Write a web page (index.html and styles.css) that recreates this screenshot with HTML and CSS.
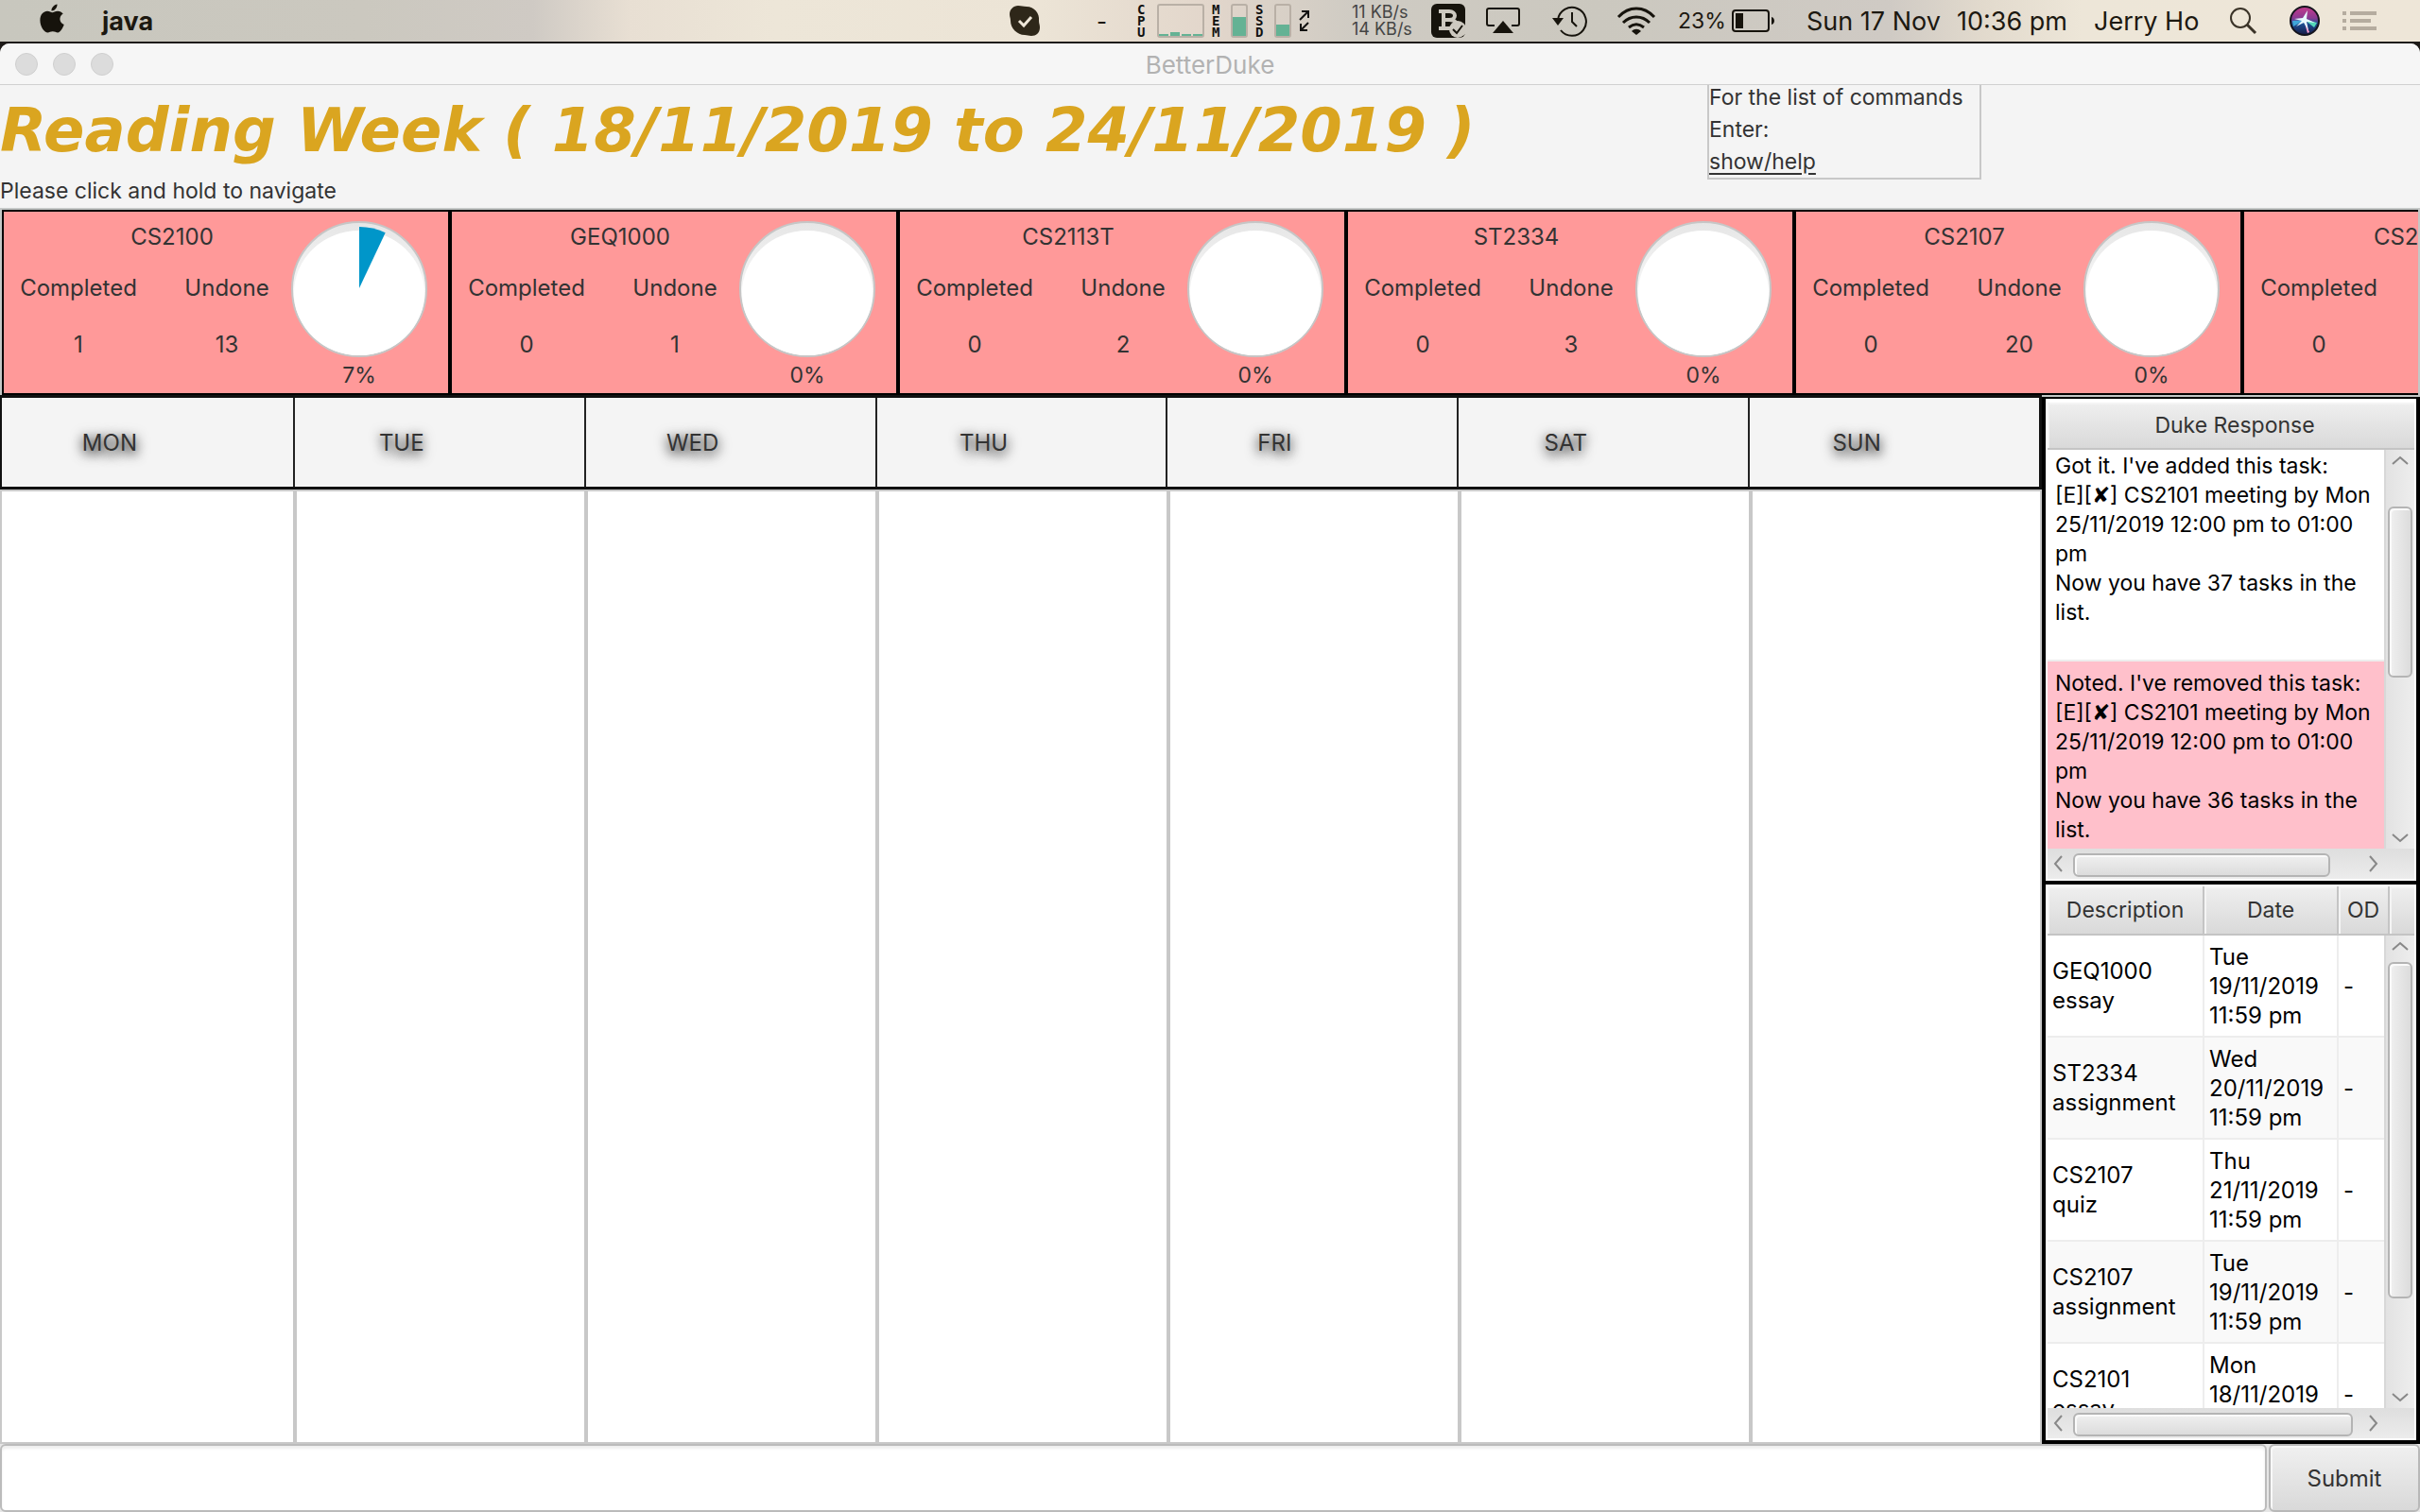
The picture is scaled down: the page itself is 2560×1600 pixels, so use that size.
FILE: index.html
```html
<!DOCTYPE html>
<html lang="en">
<head>
<meta charset="utf-8">
<title>BetterDuke</title>
<link rel="stylesheet" href="styles.css">
</head>
<body>
<header class="menubar">
  <svg class="apple" width="26" height="32" viewBox="0 0 26 32"><path fill="#16130c" d="M18.500 .500c.3 3.500-2.800 7.200-6 7C12.100 4.200 15.400 .900 18.500 .500zM13.300 9.200c1.300 0 3-1.500 5.800-1.500 2.300 0 4.300 1.100 5.600 2.900-4.900 2.900-4.100 9.500 1 11.500-.9 2.900-3.700 8.400-6.600 8.400-1.900 0-2.900-1.200-5.300-1.200-2.500 0-3.500 1.200-5.300 1.200C5.200 30.500.4 24.500.4 17.400c0-6.300 3.900-9.700 7.600-9.700 2.400 0 4.200 1.500 5.300 1.500z"/></svg>
  <strong class="app-name">java</strong>
  <div class="status">
    <svg width="32" height="32" viewBox="0 0 32 32"><path fill="#2e2719" d="M9 0C13 0 14 1 18 1c8 0 14 7 13 15 0 3 1 4 1 7 0 6-4 9-9 9-3 0-4-1-7-1C8 31 1 24 1 16c0-3-1-4-1-7 0-5 4-9 9-9z"/><path d="M10 16l5 5 8-9" fill="none" stroke="#eee6d8" stroke-width="3"/></svg>
    <span class="dash">-</span>
    <span class="stack">C<br>P<br>U</span>
    <svg width="50" height="36" viewBox="0 0 50 36"><rect x="1" y="1" width="48" height="34" rx="2" fill="none" stroke="#b9b0a6" stroke-width="2"/><path fill="#64b294" d="M2 32h10v2H2zM14 30h10v4H14zM26 32h10v2H26zM38 32h10v2H38z"/></svg>
    <span class="stack">M<br>E<br>M</span>
    <svg width="18" height="36" viewBox="0 0 18 36"><rect x="1" y="1" width="16" height="34" rx="2" fill="none" stroke="#b9b0a6" stroke-width="2"/><path fill="#64b294" d="M2 14h14v20H2z"/></svg>
    <span class="stack">S<br>S<br>D</span>
    <svg width="18" height="36" viewBox="0 0 18 36"><rect x="1" y="1" width="16" height="34" rx="2" fill="none" stroke="#b9b0a6" stroke-width="2"/><path fill="#64b294" d="M2 22h14v12H2z"/></svg>
    <svg width="12" height="24" viewBox="0 0 12 24"><path fill="none" stroke="#111" stroke-width="2" d="M3 2h7v7M10 2L1 11M2 15v7h7M2 22l8-8"/></svg>
    <span class="rate">11 KB/s<br>14 KB/s</span>
    <svg width="36" height="36" viewBox="0 0 36 36"><rect width="36" height="36" rx="6" fill="#16130c"/><path fill="none" stroke="#cdc9c0" stroke-width="4" d="M8 8h11c8 0 8 9 0 9h-6M13 8v17M8 26h12M19 17c3 0 6 1 7 3"/><circle cx="28" cy="27" r="9" fill="#cdc9c0"/><path fill="none" stroke="#16130c" stroke-width="2" d="M23 27l4 4 6-8"/></svg>
    <svg width="36" height="30" viewBox="0 0 36 30"><path fill="none" stroke="#16130c" stroke-width="2" d="M9 20H3a2 2 0 0 1-2-2V4a2 2 0 0 1 2-2h30a2 2 0 0 1 2 2v14a2 2 0 0 1-2 2h-6"/><path fill="#16130c" d="M18 15l11 13H7z"/></svg>
    <svg width="38" height="34" viewBox="0 0 38 34"><path fill="none" stroke="#16130c" stroke-width="2" d="M6 16A15 15 0 1 1 9 27M21 8v10l5 5"/><path fill="#16130c" d="M0 14h12l-6 8z"/></svg>
    <svg width="42" height="30" viewBox="0 0 42 30"><path fill="none" stroke="#16130c" stroke-width="3" d="M2 11C13-1 29-1 40 11M7 17c8-8 20-8 28 0M13 22c5-4 11-4 16 0"/><path fill="#16130c" d="M16 26c3-3 7-3 10 0l-5 4z"/></svg>
    <span class="percent">23%</span>
    <svg width="46" height="24" viewBox="0 0 46 24"><rect x="1" y="1" width="38" height="22" rx="3" fill="none" stroke="#16130c" stroke-width="2"/><path fill="#16130c" d="M4 4h8v16H4zM42 8c4 1 4 7 0 8z"/></svg>
    <span>Sun 17 Nov</span>
    <span>10:36 pm</span>
    <span>Jerry Ho</span>
    <svg width="30" height="30" viewBox="0 0 30 30"><circle cx="12" cy="12" r="10" fill="none" stroke="#3a3328" stroke-width="2"/><path d="M19 19l9 9" stroke="#3a3328" stroke-width="3"/></svg>
    <svg width="32" height="32" viewBox="0 0 32 32"><defs><linearGradient id="siri" x1="0" y1="0" x2="0" y2="1"><stop offset="0" stop-color="#c53a8c"/><stop offset=".4" stop-color="#8a3a92"/><stop offset=".6" stop-color="#1d4f93"/><stop offset="1" stop-color="#181a45"/></linearGradient></defs><circle cx="16" cy="16" r="15" fill="url(#siri)" stroke="#14141c" stroke-width="2"/><path d="M16 15L4 22l-1-6z" fill="#3fa6d8"/><path d="M16 15l13 3-3 5z" fill="#55d8b8"/><path d="M15 15l4 14 2-1z" fill="#ff9fd0"/><path d="M19 5l-1 9 9 4-9-1 2 9-5-8-8 4 6-6-8-2 9-1z" fill="#e8fbff"/></svg>
    <svg width="36" height="20" viewBox="0 0 36 20"><path fill="#b5ac9f" d="M0 0h4v4H0zM8 0h28v4H8zM0 8h4v4H0zM8 8h22v4H8zM0 16h4v4H0zM8 16h28v4H8z"/></svg>
  </div>
</header>

<div class="window">
  <div class="titlebar">
    <div class="lights"><i class="light"></i><i class="light"></i><i class="light"></i></div>
    <span class="window-title">BetterDuke</span>
  </div>

  <section class="top">
    <div class="heading">
      <h1>Reading Week ( 18/11/2019 to 24/11/2019 )</h1>
      <p class="hint">Please click and hold to navigate</p>
    </div>
    <div class="help"><p>For the list of commands<br>Enter:<br><u>show/help</u></p></div>
  </section>

  <svg width="0" height="0" class="defs"><defs>
    <linearGradient id="rim" x1="0" y1="0" x2="0" y2="1"><stop offset="0" stop-color="#e6e6e6"/><stop offset=".5" stop-color="#f6f6f6"/><stop offset="1" stop-color="#fff"/></linearGradient>
    <g id="dial"><circle cx="72" cy="72" r="71" fill="url(#rim)" stroke="#c6c6c6" stroke-width="2"/><ellipse cx="72" cy="76" rx="69" ry="66" fill="#fff"/></g>
  </defs></svg>

  <section class="modules">
    <article class="module">
      <span class="code">CS2100</span><span class="done-label">Completed</span><span class="todo-label">Undone</span><span class="done">1</span><span class="todo">13</span>
      <div class="progress"><svg width="144" height="144" viewBox="0 0 144 144"><use href="#dial"/><path fill="#0096c9" d="M72 71V6a65 65 0 0 1 27.700 6.200z"/></svg><span>7%</span></div>
    </article>
    <article class="module">
      <span class="code">GEQ1000</span><span class="done-label">Completed</span><span class="todo-label">Undone</span><span class="done">0</span><span class="todo">1</span>
      <div class="progress"><svg width="144" height="144" viewBox="0 0 144 144"><use href="#dial"/></svg><span>0%</span></div>
    </article>
    <article class="module">
      <span class="code">CS2113T</span><span class="done-label">Completed</span><span class="todo-label">Undone</span><span class="done">0</span><span class="todo">2</span>
      <div class="progress"><svg width="144" height="144" viewBox="0 0 144 144"><use href="#dial"/></svg><span>0%</span></div>
    </article>
    <article class="module">
      <span class="code">ST2334</span><span class="done-label">Completed</span><span class="todo-label">Undone</span><span class="done">0</span><span class="todo">3</span>
      <div class="progress"><svg width="144" height="144" viewBox="0 0 144 144"><use href="#dial"/></svg><span>0%</span></div>
    </article>
    <article class="module">
      <span class="code">CS2107</span><span class="done-label">Completed</span><span class="todo-label">Undone</span><span class="done">0</span><span class="todo">20</span>
      <div class="progress"><svg width="144" height="144" viewBox="0 0 144 144"><use href="#dial"/></svg><span>0%</span></div>
    </article>
    <article class="module">
      <span class="code">CS2101</span><span class="done-label">Completed</span><span class="done">0</span>
    </article>
  </section>

  <main class="main">
    <section class="calendar">
      <div class="day-names"><span>MON</span><span>TUE</span><span>WED</span><span>THU</span><span>FRI</span><span>SAT</span><span>SUN</span></div>
      <div class="days"><div></div><div></div><div></div><div></div><div></div><div></div><div></div></div>
    </section>

    <aside class="side">
      <section class="panel response">
        <div class="view">
          <table>
            <thead><tr><th>Duke Response</th></tr></thead>
            <tbody>
              <tr><td>Got it. I've added this task:<br>[E][✘] CS2101 meeting by Mon 25/11/2019 12:00 pm to 01:00 pm<br>Now you have 37 tasks in the list.</td></tr>
              <tr class="removed"><td>Noted. I've removed this task:<br>[E][✘] CS2101 meeting by Mon 25/11/2019 12:00 pm to 01:00 pm<br>Now you have 36 tasks in the list.</td></tr>
            </tbody>
          </table>
        </div>
        <div class="vscroll">
          <button type="button" aria-label="Scroll up"><svg width="18" height="10" viewBox="0 0 18 10"><path d="M1 9l8-7 8 7"/></svg></button>
          <div class="vtrack"><div class="thumb"></div></div>
          <button type="button" aria-label="Scroll down"><svg width="18" height="10" viewBox="0 0 18 10"><path d="M1 1l8 7 8-7"/></svg></button>
        </div>
        <div class="hscroll">
          <button type="button" aria-label="Scroll left"><svg width="10" height="18" viewBox="0 0 10 18"><path d="M9 1L2 9l7 8"/></svg></button>
          <div class="htrack"><div class="thumb"></div></div>
          <button type="button" aria-label="Scroll right"><svg width="10" height="18" viewBox="0 0 10 18"><path d="M1 1l7 8-7 8"/></svg></button>
        </div>
      </section>

      <section class="panel tasks">
        <div class="view">
          <table>
            <colgroup><col class="c-desc"><col class="c-date"><col class="c-od"><col></colgroup>
            <thead><tr><th>Description</th><th>Date</th><th>OD</th><th></th></tr></thead>
            <tbody>
              <tr><td>GEQ1000<br>essay</td><td>Tue<br>19/11/2019<br>11:59 pm</td><td>-</td><td></td></tr>
              <tr><td>ST2334<br>assignment</td><td>Wed<br>20/11/2019<br>11:59 pm</td><td>-</td><td></td></tr>
              <tr><td>CS2107<br>quiz</td><td>Thu<br>21/11/2019<br>11:59 pm</td><td>-</td><td></td></tr>
              <tr><td>CS2107<br>assignment</td><td>Tue<br>19/11/2019<br>11:59 pm</td><td>-</td><td></td></tr>
              <tr><td>CS2101<br>essay</td><td>Mon<br>18/11/2019<br>11:59 pm</td><td>-</td><td></td></tr>
            </tbody>
          </table>
        </div>
        <div class="vscroll">
          <button type="button" aria-label="Scroll up"><svg width="18" height="10" viewBox="0 0 18 10"><path d="M1 9l8-7 8 7"/></svg></button>
          <div class="vtrack"><div class="thumb"></div></div>
          <button type="button" aria-label="Scroll down"><svg width="18" height="10" viewBox="0 0 18 10"><path d="M1 1l8 7 8-7"/></svg></button>
        </div>
        <div class="hscroll">
          <button type="button" aria-label="Scroll left"><svg width="10" height="18" viewBox="0 0 10 18"><path d="M9 1L2 9l7 8"/></svg></button>
          <div class="htrack"><div class="thumb"></div></div>
          <button type="button" aria-label="Scroll right"><svg width="10" height="18" viewBox="0 0 10 18"><path d="M1 1l7 8-7 8"/></svg></button>
        </div>
      </section>
    </aside>
  </main>

  <form class="command">
    <input type="text" aria-label="Command">
    <button type="button" class="submit">Submit</button>
  </form>
</div>
</body>
</html>
```
FILE: styles.css
```css
* { box-sizing: border-box; }

body {
  margin: 0;
  height: 100vh;
  display: flex;
  flex-direction: column;
  overflow: hidden;
  background: #1d1a17;
  color: #333;
  font: 24px/31px Inter, "Liberation Sans", sans-serif;
}

button, input { font: inherit; color: inherit; margin: 0; }
svg { display: block; }
.defs { position: absolute; }

/* System menu bar */
.menubar {
  flex: none;
  height: 44px;
  display: flex;
  align-items: center;
  padding: 0 46px 0 42px;
  color: #1c1810;
  font-size: 27px;
  white-space: nowrap;
  background: linear-gradient(90deg, #c8c7be 0, #cbc8bf 15%, #cfcac4 22%, #e8dfd3 26%, #ede6d8 32%, #ece4d6 43%, #e2d6cb 50%, #cfcbc3 56%, #cbc8bf 66%, #cfcac4 78%, #e2dacd 82%, #ede6d8 86%, #eee6d8 100%);
}
.apple { margin-bottom: 4px; }
.app-name { margin-left: 40px; font-weight: 700; }
.status {
  margin-left: auto;
  height: 44px;
  display: grid;
  align-items: center;
  grid-template-columns: 92px 43px 21px 58px 20px 26px 20px 26px 56px 84px 58px 70px 68px 65px 57px 79px 159px 145px 143px 64px 56px 36px;
}
.dash { font-size: 24px; }
.stack { font: bold 14px/12px "DejaVu Sans Mono", monospace; color: #111; }
.rate { font-size: 18px; line-height: 18px; color: #444; }
.percent { font-size: 23px; }

/* Window chrome */
.window {
  flex: 1;
  min-height: 0;
  margin-top: 2px;
  display: flex;
  flex-direction: column;
  background: #f4f4f4;
  border-radius: 10px 10px 0 0;
  overflow: hidden;
}
.titlebar {
  flex: none;
  height: 44px;
  display: grid;
  grid-template-columns: 1fr auto 1fr;
  align-items: center;
  padding: 0 16px;
  background: #f6f6f6;
  border-bottom: 1px solid #d0d0d0;
}
.lights { display: flex; gap: 16px; }
.light {
  width: 24px;
  height: 24px;
  border-radius: 50%;
  background: #dcdcdc;
  border: 1px solid #cfcfcf;
}
.window-title {
  padding-top: 2px;
  color: #b2b2b2;
  font-size: 26px;
}

/* Heading and help */
.top {
  flex: none;
  height: 130px;
  display: grid;
  grid-template-columns: 1806fr 754fr;
  align-items: start;
  font-size: 23px;
}
h1 {
  margin: 0;
  padding-top: 10px;
  font: italic bold 64px/76px "DejaVu Sans", Verdana, sans-serif;
  color: #daa520;
  white-space: nowrap;
}
.hint { margin: 0; padding-top: 11px; }
.help {
  display: flow-root;
  width: 290px;
  height: 100px;
  line-height: 34px;
  white-space: nowrap;
  border: 2px solid #c8c8c8;
  border-top: 0;
}
.help p { margin: -4px 0 0; }
.help u { text-underline-offset: 4px; }

/* Module cards */
.modules {
  flex: none;
  height: 198px;
  display: flex;
  overflow: hidden;
  border: 2px solid #c4c7c6;
  border-bottom: 0;
}
.module {
  flex: none;
  width: 474px;
  height: 196px;
  display: grid;
  grid-template-columns: 158px 156px 124px;
  grid-template-rows: 52px 56px 64px 16px;
  align-items: center;
  justify-items: center;
  border: 2px solid #000;
  background: #ff9999;
}
.code { grid-area: 1 / 1 / 2 / 3; padding-left: 42px; }
.done-label { grid-area: 2 / 1; }
.todo-label { grid-area: 2 / 2; }
.done { grid-area: 3 / 1; }
.todo { grid-area: 3 / 2; }
.progress {
  grid-area: 1 / 3 / 5 / 4;
  align-self: start;
  display: flex;
  flex-direction: column;
  align-items: center;
  padding-top: 10px;
  font-size: 23px;
  gap: 4px;
}

/* Week calendar */
.main {
  flex: 1;
  min-height: 0;
  display: grid;
  grid-template-columns: 1fr 400px;
}
.calendar { display: flex; flex-direction: column; min-height: 0; }
.day-names {
  height: 100px;
  display: grid;
  grid-template-columns: repeat(7, 1fr);
  border: 2px solid #111;
  border-width: 3px 3px 3px 2px;
}
.day-names span {
  display: flex;
  align-items: center;
  justify-content: center;
  padding-right: 80px;
  text-shadow: 0 4px 12px rgba(0, 0, 0, .7), 0 3px 14px rgba(0, 0, 0, .6);
}
.day-names span + span { border-left: 2px solid #222; }
.days {
  flex: 1;
  display: grid;
  grid-template-columns: repeat(7, 1fr);
  padding-left: 2px;
  background: #fff;
  border: solid #c8c8c8;
  border-width: 2px 0 2px 2px;
}
.days div { border-right: 2px solid #c8c8c8; }
.days div + div { border-left: 2px solid #c8c8c8; }

/* Side panels */
.side {
  min-height: 0;
  display: grid;
  grid-template-rows: 514fr 594fr;
  border-top: 2px solid #c4c7c6;
}
.panel {
  min-height: 0;
  overflow: hidden;
  display: grid;
  grid-template-columns: 1fr 32px;
  background: #fff;
  border: 4px solid #000;
  padding: 2px;
}
.response { grid-template-rows: 50px 1fr 32px; border-width: 2px 4px; padding-top: 4px; font-size: 23px; }
.tasks { grid-template-rows: 52px 1fr 32px; border-top-width: 2px; font-size: 24px; }
.view { grid-area: 1 / 1 / 3 / 3; min-height: 0; overflow: hidden; }
table { width: 100%; table-layout: fixed; border-collapse: separate; border-spacing: 0; color: #000; }
th {
  height: 50px;
  padding: 0;
  font-size: 23px;
  font-weight: 400;
  color: #333;
  background: linear-gradient(#efefef, #d9d9d9);
  border-bottom: 2px solid #c4c4c4;
  box-shadow: inset 2px 2px #f4f4f4;
}
td { padding: 0; }
.response th { padding-left: 8px; }
.response td { height: 224px; padding: 2px 32px 0 8px; vertical-align: top; border-bottom: 2px solid #ededed; }
.response .removed td { padding-top: 8px; background: #ffc0cb; }
.tasks th { height: 52px; }
.tasks th + th { border-left: 2px solid #c4c4c4; }
.tasks td { height: 108px; padding-left: 5px; border-bottom: 2px solid #ededed; }
.tasks td + td { border-left: 2px solid #ededed; }
.tasks tr:nth-child(even) td { background: #f9f9f9; }
.c-desc { width: 164px; }
.c-date { width: 142px; }
.c-od { width: 54px; }

/* Scroll bars */
.vscroll {
  grid-area: 2 / 2;
  display: flex;
  flex-direction: column;
  border-left: 2px solid #d8d8d8;
  background: linear-gradient(90deg, #e2e2e2, #eee);
}
.hscroll {
  grid-area: 3 / 1 / 4 / 3;
  display: flex;
  padding-right: 32px;
  background: linear-gradient(#dedede, #ececec);
}
.vscroll button, .hscroll button {
  flex: none;
  display: grid;
  place-items: center;
  padding: 0;
  border: 0;
  background: none;
}
.vscroll button { height: 22px; }
.hscroll button { width: 22px; }
.vscroll path, .hscroll path { fill: none; stroke: #888; stroke-width: 2; }
.vtrack, .htrack { flex: 1; min-width: 0; min-height: 0; }
.vtrack { padding: 0 2px; }
.htrack { padding: 5px 5px; }
.thumb {
  border: 2px solid #b4b4b4;
  border-radius: 6px;
  box-shadow: inset 2px 2px #fafafa;
}
.vtrack .thumb { background: linear-gradient(90deg, #f0f0f0, #dcdcdc); }
.htrack .thumb { height: 25px; background: linear-gradient(#f0f0f0, #dcdcdc); }
.response .vtrack .thumb { height: 48%; margin-top: 38px; }
.response .htrack .thumb { width: 90%; }
.tasks .vtrack .thumb { height: 78%; margin-top: 6px; }
.tasks .htrack .thumb { width: 98%; }

/* Command line */
.command { flex: none; height: 72px; display: flex; gap: 2px; background: #e6e6e6; }
.command input {
  flex: 1;
  min-width: 0;
  border: 2px solid #bbb;
  border-radius: 6px;
  background: #fff;
  padding: 0 14px;
  box-shadow: inset 0 3px 3px #eee;
}
.submit {
  width: 160px;
  border: 2px solid #b8b8b8;
  border-radius: 6px;
  background: linear-gradient(#f0f0f0, #d9d9d9);
  box-shadow: inset 2px 2px #f8f8f8;
}
```
